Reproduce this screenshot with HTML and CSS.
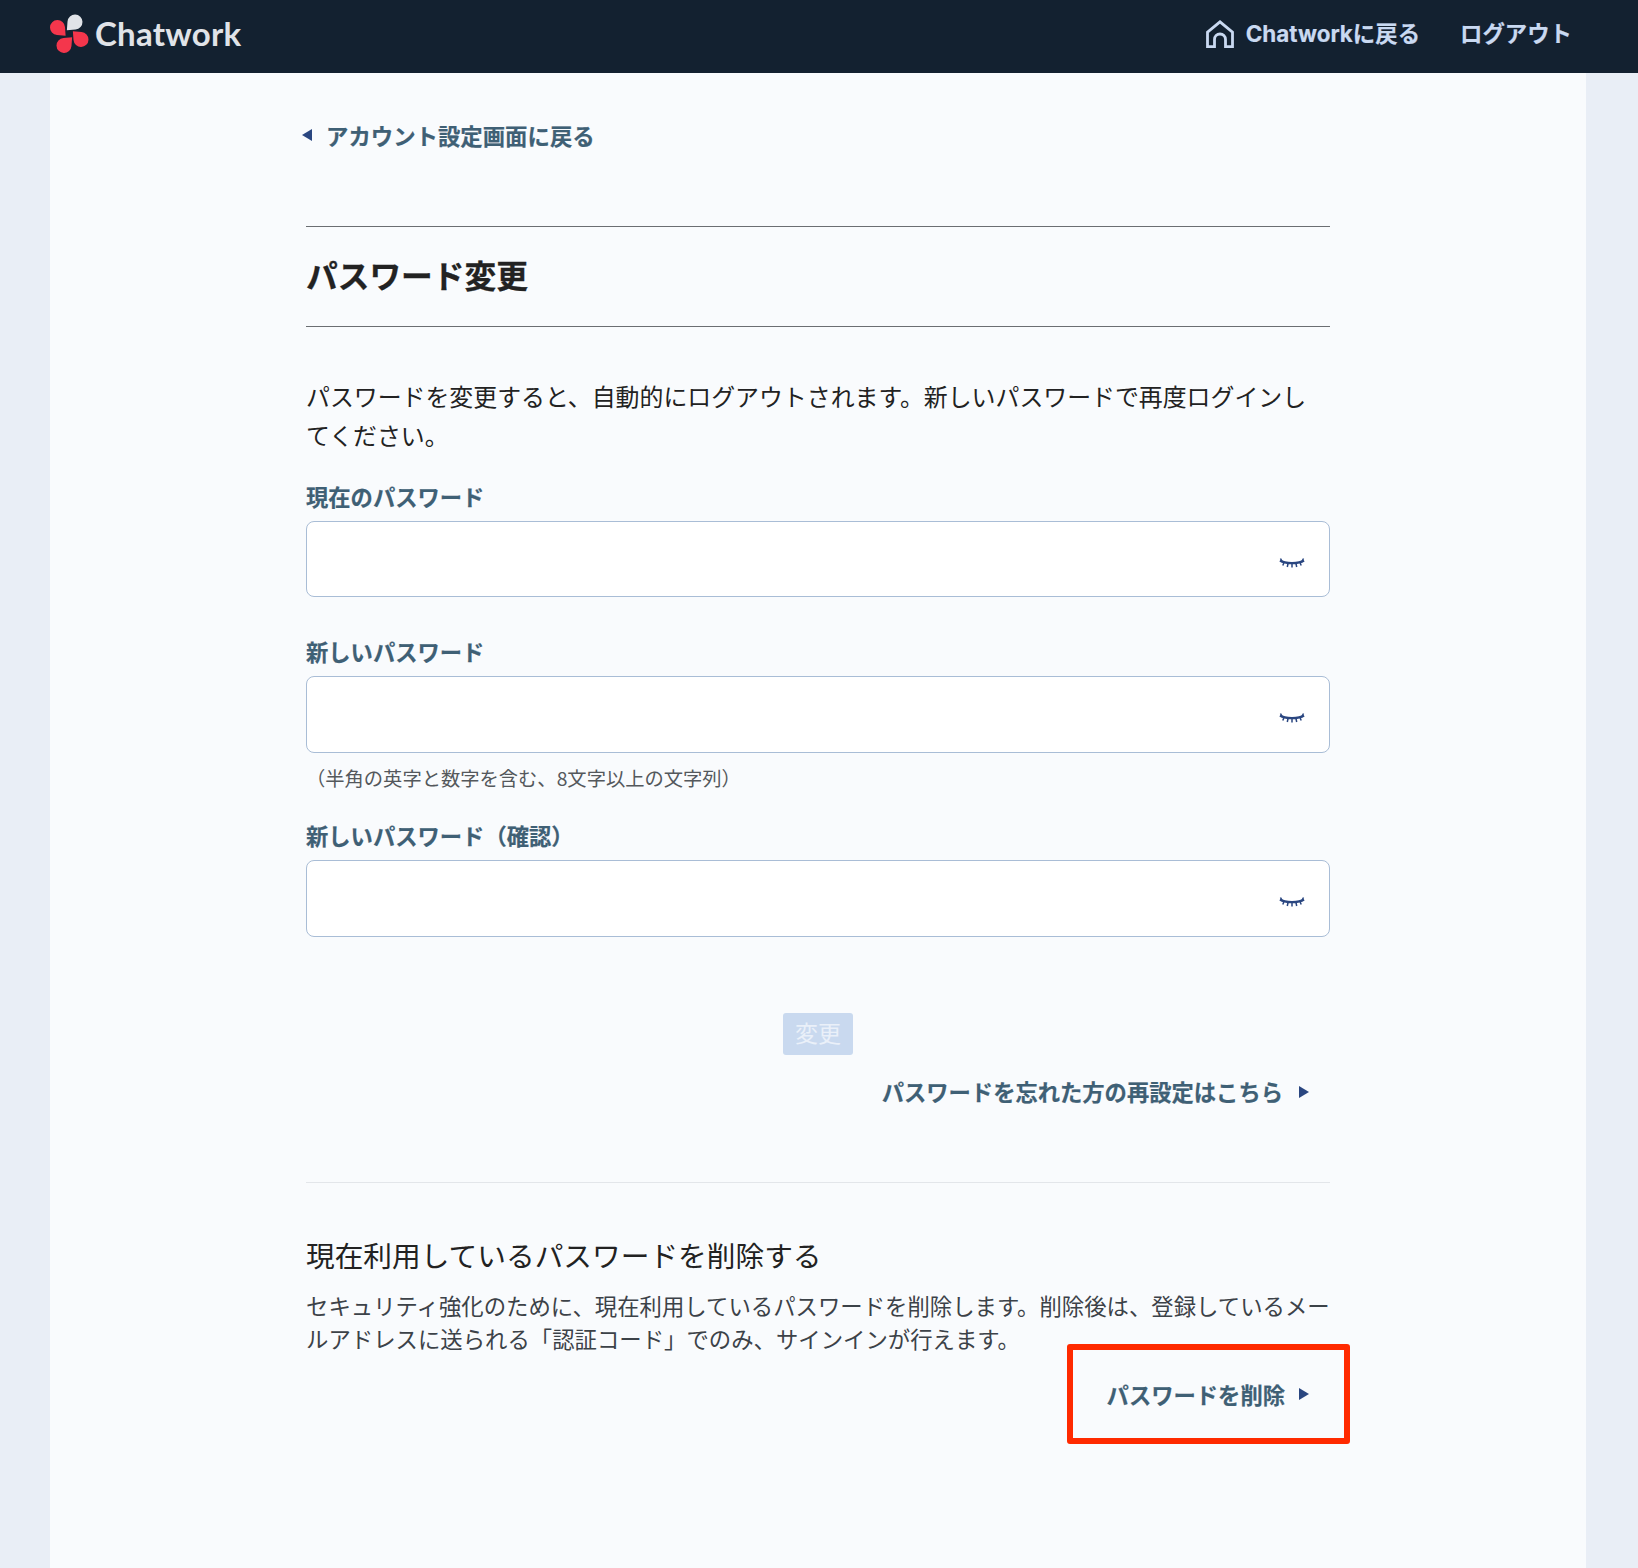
FILE: index.html
```html
<!DOCTYPE html>
<html lang="ja">
<head>
<meta charset="utf-8">
<title>パスワード変更</title>
<link rel="stylesheet" href="styles.css">
</head>
<body>
<header class="topbar">
  <a class="brand" href="#">
    <svg class="brand-mark" viewBox="0 0 39 39" aria-hidden="true">
      <path class="petal-grey" transform="translate(25 8) rotate(135)" d="M11.500 0L4.890 5.690A7.500 7.500 0 1 1 4.890 -5.690Z"/>
      <path class="petal-red" transform="translate(7.500 13.500) rotate(45)" d="M11.500 0L4.890 5.690A7.500 7.500 0 1 1 4.890 -5.690Z"/>
      <path class="petal-red" transform="translate(31 25.500) rotate(225)" d="M11.500 0L4.890 5.690A7.500 7.500 0 1 1 4.890 -5.690Z"/>
      <path class="petal-red" transform="translate(14 31.500) rotate(-45)" d="M11.500 0L4.890 5.690A7.500 7.500 0 1 1 4.890 -5.690Z"/>
    </svg>
    <span class="brand-name">Chatwork</span>
  </a>
  <nav class="topnav">
    <a class="topnav-link" href="#">
      <svg class="home-icon" viewBox="0 0 28 28" aria-hidden="true">
        <path fill="none" stroke="#c9d9f1" stroke-width="2.800" d="M1.500 26.600V12.200L14 1.800l12.500 10.400v14.400h-7v-7.100a5.500 5.500 0 0 0-11 0v7.100z"/>
      </svg>
      <span>Chatworkに戻る</span>
    </a>
    <a class="topnav-link" href="#">ログアウト</a>
  </nav>
</header>

<main class="sheet">
  <a class="back-link" href="#"><span class="tri tri-left"></span>アカウント設定画面に戻る</a>

  <h1 class="page-title">パスワード変更</h1>

  <p class="intro">パスワードを変更すると、自動的にログアウトされます。新しいパスワードで再度ログインしてください。</p>

  <form class="pw-form">
    <div class="field field-first">
      <label class="field-label">現在のパスワード</label>
      <div class="input-box">
        <svg class="eye" viewBox="0 0 26 10" aria-hidden="true"><use href="#lash"/></svg>
      </div>
    </div>
    <div class="field">
      <label class="field-label">新しいパスワード</label>
      <div class="input-box">
        <svg class="eye" viewBox="0 0 26 10" aria-hidden="true"><use href="#lash"/></svg>
      </div>
      <p class="hint">（半角の英字と数字を含む、8文字以上の文字列）</p>
    </div>
    <div class="field field-third">
      <label class="field-label">新しいパスワード（確認）</label>
      <div class="input-box">
        <svg class="eye" viewBox="0 0 26 10" aria-hidden="true"><use href="#lash"/></svg>
      </div>
    </div>
    <div class="submit-row"><button class="submit" type="button" disabled>変更</button></div>
  </form>

  <div class="forgot-row">
    <a class="action-link" href="#">パスワードを忘れた方の再設定はこちら<span class="tri tri-right"></span></a>
  </div>

  <hr class="divider">

  <section class="delete">
    <h2 class="delete-title">現在利用しているパスワードを削除する</h2>
    <p class="delete-text">セキュリティ強化のために、現在利用しているパスワードを削除します。削除後は、登録しているメールアドレスに送られる「認証コード」でのみ、サインインが行えます。</p>
    <div class="delete-row">
      <a class="action-link highlighted" href="#">パスワードを削除<span class="tri tri-right"></span></a>
    </div>
  </section>
</main>

<svg class="defs" aria-hidden="true">
  <symbol id="lash" viewBox="0 0 26 10">
    <path fill="none" stroke="#2a4680" stroke-width="2.200" d="M1 2.500C6 6 20 6 25 2.500"/>
    <path fill="none" stroke="#2a4680" stroke-width="1.500" d="M1.500 .5l2 3.500M24.500 .5l-2 3.500M5 4.500l-1.200 3M9 5.500l-.7 3.500M13 5.500v4M17 5.500l.7 3.500M21 4.500l1.200 3"/>
  </symbol>
</svg>
</body>
</html>
```
FILE: styles.css
```css
* { box-sizing: border-box; }
html, body { margin: 0; height: 100%; }
body {
  background: #e9eef6;
  font-family: "Noto Sans CJK JP", "Noto Sans", sans-serif;
  color: #222;
  display: flex;
  flex-direction: column;
  overflow: hidden;
}
a { text-decoration: none; }
.defs { width: 0; height: 0; position: absolute; }

.topbar {
  height: 73px;
  flex: none;
  background: #132130;
  display: flex;
  align-items: center;
  justify-content: space-between;
  padding: 0 66px 6px 50px;
}
.brand { display: flex; align-items: center; gap: 6px; }
.brand-mark { width: 39px; height: 39px; display: block; }
.petal-grey { fill: #e0e3e8; }
.petal-red { fill: #f4364c; }
.brand-name {
  font-family: Lato, "Noto Sans", sans-serif;
  font-size: 33px;
  font-weight: 700;
  letter-spacing: .25px;
  color: #e0e3e8;
  padding-bottom: 2px;
}
.topnav { display: flex; align-items: center; gap: 40px; }
.topnav-link {
  display: flex;
  align-items: center;
  gap: 12px;
  font-family: Inter, "Noto Sans CJK JP", sans-serif;
  font-size: 22.400px;
  font-weight: 700;
  -webkit-text-stroke: .2px #c9d9f1;
  color: #c9d9f1;
  padding-bottom: 4px;
}
.home-icon { width: 28px; height: 28px; display: block; margin-top: 4px; }

.sheet {
  flex: 1;
  margin: 0 52px 0 50px;
  background: #f9fbfd;
  padding: 46px 256px 0;
}
.back-link {
  display: flex;
  align-items: center;
  font-size: 22.400px;
  font-weight: 700;
  line-height: 32px;
  -webkit-text-stroke: .2px #3f6075;
  color: #3f6075;
}
.tri { display: inline-block; width: 0; height: 0; border-style: solid; }
.tri-left {
  border-width: 6px 10px 6px 0;
  border-color: transparent #2a4680 transparent transparent;
  margin: 0 14px 0 -4px;
}
.tri-right {
  border-width: 6px 0 6px 10px;
  border-color: transparent transparent transparent #2a4680;
  margin: 2px 0 0 16px;
}

.page-title {
  margin: 75px 0 0;
  border-top: 1px solid #6b6e72;
  border-bottom: 1px solid #6b6e72;
  height: 101px;
  padding-bottom: 6px;
  display: flex;
  align-items: center;
  font-size: 31.700px;
  font-weight: 700;
  -webkit-text-stroke: .3px #222;
  color: #222;
}
.intro {
  margin: 49px 0 0;
  padding-right: 10px;
  font-size: 23.900px;
  line-height: 39px;
  color: #222;
}

.field { margin-top: 38px; }
.field-first { margin-top: 26px; }
.field-third { margin-top: 25px; }
.field-label {
  display: block;
  font-size: 22.300px;
  font-weight: 700;
  line-height: 33px;
  margin-bottom: 8px;
  -webkit-text-stroke: .2px #3f6075;
  color: #3f6075;
}
.input-box {
  height: 77px;
  background: #fff;
  border: 1px solid #a9bdd6;
  border-radius: 8px;
  display: flex;
  align-items: center;
  justify-content: flex-end;
  padding: 7px 24px 0 0;
}
.field-first .input-box { height: 76px; }
.eye { width: 26px; height: 10px; display: block; }
.hint {
  margin: 9px 0 0;
  font-size: 19.300px;
  line-height: 32px;
  color: #54585c;
}
.submit-row { display: flex; justify-content: center; margin-top: 76px; }
.submit {
  width: 70px;
  height: 42px;
  padding: 0 0 4px;
  border: 0;
  border-radius: 3px;
  background: #c9d9ef;
  color: #eaf0f9;
  font: 400 23px/38px "Noto Sans CJK JP", sans-serif;
}

.forgot-row { display: flex; justify-content: flex-end; margin-top: 19px; padding-right: 21px; }
.action-link {
  display: inline-flex;
  align-items: center;
  font-size: 22.300px;
  font-weight: 700;
  line-height: 34px;
  -webkit-text-stroke: .2px #3f6075;
  color: #3f6075;
}
.divider { margin: 74px 0 0; border: 0; border-top: 1px solid #e3e6ea; }

.delete-title {
  margin: 49px 0 0;
  font-size: 28.700px;
  font-weight: 400;
  line-height: 46px;
  color: #222;
}
.delete-text {
  margin: 11px 0 0;
  font-size: 22.380px;
  line-height: 33px;
  color: #3c4248;
}
.delete-row { display: flex; justify-content: flex-end; margin: -11px -20px 0 0; }
.highlighted {
  width: 283px;
  height: 100px;
  border: 6px solid #ff2a00;
  border-radius: 3px;
  justify-content: flex-end;
  padding-right: 35px;
}
.highlighted .tri-right { margin: 0 0 0 14px; }
```
